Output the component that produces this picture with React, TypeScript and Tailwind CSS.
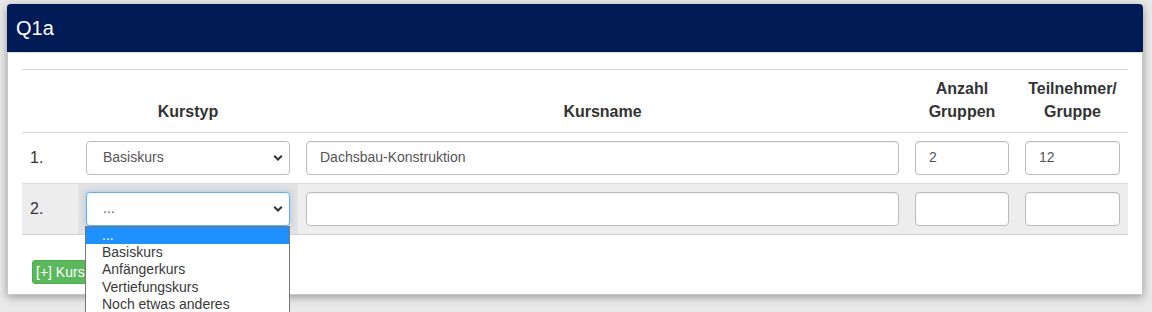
import React from 'react'

const cols = 'grid grid-cols-[56px_220px_1fr_110px_111px]'

function Chevron() {
  return (
    <svg width="10" height="7" viewBox="0 0 10 7" className="absolute right-[6px] top-1/2 -translate-y-1/2">
      <polyline points="1.2,1.2 5,5 8.8,1.2" fill="none" stroke="#333" strokeWidth="2" />
    </svg>
  )
}

function FakeSelect({ value, focused }: { value: string; focused?: boolean }) {
  return (
    <div
      className={
        'relative h-[34px] rounded-[4px] bg-white flex items-center pl-[16px] text-[14px] text-[#555] border ' +
        (focused
          ? 'border-[#66afe9] shadow-[0_0_6px_rgba(102,175,233,0.6)]'
          : 'border-[#bbb]')
      }
    >
      {value}
      <Chevron />
    </div>
  )
}

function Field({ value }: { value?: string }) {
  return (
    <div className="h-[34px] rounded-[4px] bg-white border border-[#bbb] flex items-center px-[13px] text-[14px] text-[#555] shadow-[inset_0_1px_1px_rgba(0,0,0,0.06)]">
      {value}
    </div>
  )
}

const options = ['...', 'Basiskurs', 'Anfängerkurs', 'Vertiefungskurs', 'Noch etwas anderes']

export default function App() {
  return (
    <div
      className="min-h-screen bg-[#e9e9e9] pt-[4px] pl-[7px]"
      style={{ fontFamily: '"Liberation Sans", Arial, sans-serif' }}
    >
      <div className="w-[1136px] bg-white rounded-t-[4px] border-x border-b border-[#c8c8c8] shadow-[0_2px_9px_rgba(0,0,0,0.35)]">
        {/* Header */}
        <div className="h-[49px] -mx-px bg-[#001b56] rounded-t-[4px] text-white text-[20px] flex items-center px-[9px] border-b border-[#dcdcdc]">
          Q1a
        </div>

        {/* Body */}
        <div className="px-[14px] pt-[16px] pb-[10px] text-[#333]">
          <div className="border-t border-[#d6d6d6]">
            {/* Table head */}
            <div className={cols + ' border-b border-[#d6d6d6] text-[16px] font-bold leading-[22.8px] text-center items-end'}>
              <div className="p-2" />
              <div className="p-2">Kurstyp</div>
              <div className="p-2">Kursname</div>
              <div className="p-2">Anzahl<br />Gruppen</div>
              <div className="p-2">Teilnehmer/<br />Gruppe</div>
            </div>

            {/* Row 1 */}
            <div className={cols + ' border-b border-[#dcdcdc] items-center text-[16px]'}>
              <div className="p-2">1.</div>
              <div className="p-2"><FakeSelect value="Basiskurs" /></div>
              <div className="p-2"><Field value="Dachsbau-Konstruktion" /></div>
              <div className="p-2"><Field value="2" /></div>
              <div className="p-2"><Field value="12" /></div>
            </div>

            {/* Row 2 */}
            <div className={cols + ' border-b border-[#d0d0d0] items-stretch text-[16px] bg-[#ededed]'}>
              <div className="p-2 flex items-center">2.</div>
              <div className="p-2 bg-[#e2e2e2] relative">
                <FakeSelect value="..." focused />
                {/* Open dropdown list */}
                <div className="absolute left-[7px] top-[42px] w-[205px] bg-white border border-[#767676] z-10 text-[14px] text-[#3a3a3a]">
                  {options.map((o, i) => (
                    <div
                      key={o}
                      className={
                        'h-[17.4px] leading-[17.4px] pl-[16px] ' +
                        (i === 0 ? 'bg-[#1e90ff] text-white' : '')
                      }
                    >
                      {o}
                    </div>
                  ))}
                </div>
              </div>
              <div className="p-2"><Field /></div>
              <div className="p-2"><Field /></div>
              <div className="p-2"><Field /></div>
            </div>
          </div>

          <div className="mt-[25px] pl-[10px]">
            <button className="h-[24px] px-[3px] rounded-[3px] bg-[#5cb85c] border border-[#4cae4c] text-white text-[14px] leading-none">
              [+] Kurs hinzufügen
            </button>
          </div>
        </div>
      </div>
    </div>
  )
}
